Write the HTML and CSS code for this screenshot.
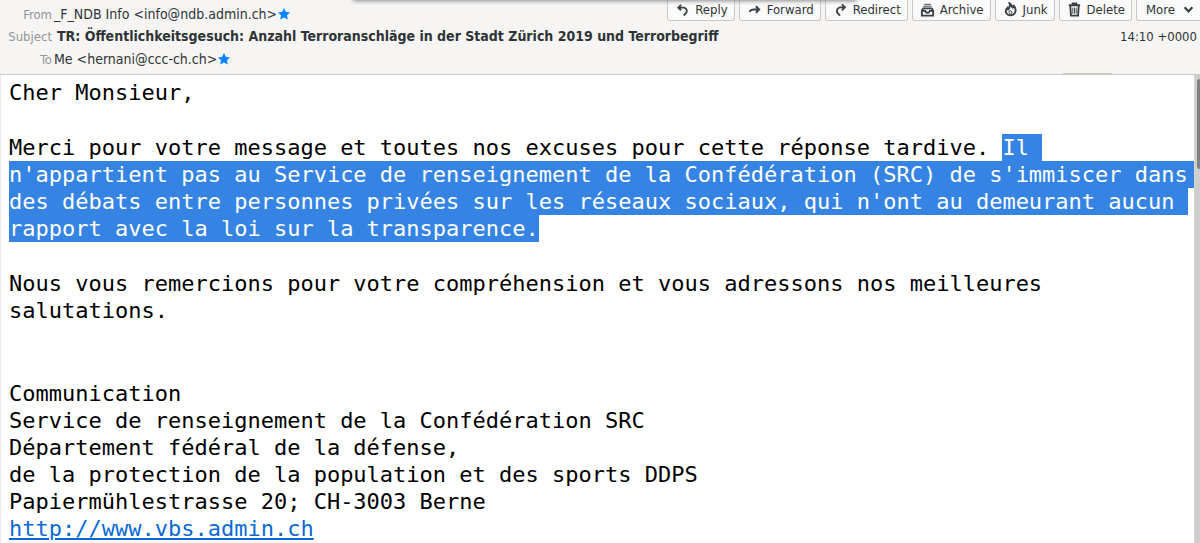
FILE: index.html
```
<!DOCTYPE html>
<html lang="fr">
<head>
<meta charset="utf-8">
<title>TR: Öffentlichkeitsgesuch</title>
<link rel="stylesheet" href="styles.css">
</head>
<body>
<header class="head">
  <div class="top-shadow"></div>
  <div class="row row-from">
    <span class="label">From</span>
    <span class="value">_F_NDB Info &lt;info@ndb.admin.ch&gt;</span>
    <svg class="star" viewBox="0 0 14 14" aria-hidden="true"><path d="M7 1l1.800 3.800 4.200.6-3 2.900.8 4.300L7 10.600l-3.800 2 .8-4.300-3-2.900 4.200-.6z"/></svg>
    <div class="actions">
      <button type="button"><svg viewBox="0 0 16 16" aria-hidden="true"><path d="M6.500 3L3.500 6l3 3M4 6h5.500a3.500 3.500 0 0 1 2 6L9.500 14.500"/></svg>Reply</button>
      <button type="button"><svg viewBox="0 0 16 16" aria-hidden="true"><path d="M9.500 4.500L13 8l-3.500 3.500M13 8H7Q4 8 2.500 10.500"/></svg>Forward</button>
      <button type="button"><svg viewBox="0 0 16 16" aria-hidden="true"><path d="M9.500 2.500l3.200 3.200-3.200 3.200M12.500 5.700H7.500a4 4 0 0 0-2.500 6.300L7.500 14.500"/></svg>Redirect</button>
      <button type="button"><svg viewBox="0 0 16 16" aria-hidden="true"><path d="M2 9l1.500-2.200h9L14 9v5.500H2zM2 9.500h3.600q.5 2 2.400 2t2.400-2H14"/><path class="thin" d="M3.500 4.500h9M4.500 2.500h7"/></svg>Archive</button>
      <button type="button"><svg viewBox="0 0 16 16" aria-hidden="true"><path d="M7 1.500c2.500 1.500 2 3.500 3.500 4.500.8-.5.800-1.500.500-2.500 2.500 2.500 3 6 1.500 8.500-1.500 2.500-6.500 3-8.500.5C2 10 3 8 4.500 6.500c0 1 .5 1.500 1 1.500C7 6 8 4 7 1.500z"/><path class="thin" d="M8 13c-2-1-2-2.500-.500-4 .5 1.300 1 1.500 1.500 1 1 1.200.5 2.500-1 3z"/></svg>Junk</button>
      <button type="button"><svg viewBox="0 0 16 16" aria-hidden="true"><path d="M2 3.500h12M6 3V1.500h4V3M3.500 4l.7 10.500h7.600L12.500 4"/><path class="thin" d="M6.200 6v6.500M8 6v6.500M9.800 6v6.500"/></svg>Delete</button>
      <button type="button" class="more">More<svg class="chev" viewBox="0 0 10 10" aria-hidden="true"><path d="M1.500 3L5 6.800 8.500 3"/></svg></button>
    </div>
  </div>
  <div class="row row-subject">
    <span class="label">Subject</span>
    <h1 class="subject">TR: Öffentlichkeitsgesuch: Anzahl Terroranschläge in der Stadt Zürich 2019 und Terrorbegriff</h1>
    <time class="time">14:10 +0000</time>
  </div>
  <div class="row row-to">
    <span class="label">To</span>
    <span class="value">Me &lt;hernani@ccc-ch.ch&gt;</span>
    <svg class="star" viewBox="0 0 14 14" aria-hidden="true"><path d="M7 1l1.800 3.800 4.200.6-3 2.900.8 4.300L7 10.600l-3.800 2 .8-4.300-3-2.900 4.200-.6z"/></svg>
  </div>
  <div class="tab-edge"></div>
</header>
<main class="pane">
  <article class="mail">
    <p>Cher Monsieur,</p>
    <p>Merci pour votre message et toutes nos excuses pour cette réponse tardive. <span class="sel">Il <br>n'appartient pas au Service de renseignement de la Confédération (SRC) de s'immiscer dans <br>des débats entre personnes privées sur les réseaux sociaux, qui n'ont au demeurant aucun <br>rapport avec la loi sur la transparence.</span></p>
    <p class="closing">Nous vous remercions pour votre compréhension et vous adressons nos meilleures<br>salutations.</p>
    <p>Communication<br>Service de renseignement de la Confédération SRC<br>Département fédéral de la défense,<br>de la protection de la population et des sports DDPS<br>Papiermühlestrasse 20; CH-3003 Berne<br><a href="http://www.vbs.admin.ch">http://www.vbs.admin.ch</a></p>
  </article>
  <div class="scroll"><div class="thumb"></div></div>
</main>
</body>
</html>
```
FILE: styles.css
```
* { box-sizing: border-box; }
html, body { height: 100%; }
body {
  margin: 0;
  display: flex;
  flex-direction: column;
  overflow: hidden;
  background: #fff;
  color: #2e3436;
  font-family: "DejaVu Sans Condensed", "DejaVu Sans", sans-serif;
  font-stretch: condensed;
  font-size: 13px;
}
.head {
  position: relative;
  flex: none;
  background: #f6f5f4;
  border-bottom: 1px solid #cdc7c2;
}
.top-shadow {
  position: absolute;
  top: -4px;
  left: 354px;
  width: 502px;
  height: 4px;
  box-shadow: 0 0 4px 1px #888;
}
.tab-edge {
  position: absolute;
  right: 88px;
  bottom: 0;
  width: 49px;
  height: 1px;
  background: #cfcac6;
}
.row { display: flex; align-items: center; }
.row-from { height: 28px; }
.row-subject { height: 16px; }
.row-to { height: 30px; }
.label {
  flex: none;
  width: 52px;
  margin-right: 2px;
  text-align: right;
  color: #929595;
}
.value { font-size: 14px; white-space: nowrap; }
.subject {
  margin: 0 0 0 3px;
  font-size: 14px;
  line-height: 16px;
  font-weight: bold;
  white-space: nowrap;
}
.time { margin-left: auto; padding-right: 3px; }
.star { width: 14px; height: 14px; fill: #0a84ff; }
.actions {
  align-self: flex-start;
  display: flex;
  gap: 4px;
  margin-left: auto;
}
.actions button {
  display: flex;
  align-items: center;
  gap: 5px;
  height: 21px;
  padding: 0 6px 2px 7px;
  border: 1px solid #cdc7c2;
  border-top: 0;
  border-radius: 0 0 3px 3px;
  background: #fbfafa;
  color: inherit;
  font: inherit;
}
.actions svg {
  width: 15px;
  height: 15px;
  fill: none;
  stroke: #3a4043;
  stroke-width: 2;
}
.actions .thin { stroke-width: 1; }
.actions .more { padding: 0 6px 2px 9px; gap: 8px; border-right: 0; border-radius: 0 0 0 3px; }
.actions .chev { width: 11px; height: 11px; }
.pane { flex: 1; min-height: 0; display: flex; border-left: 1px solid #eeedec; }
.mail {
  flex: 1;
  min-width: 0;
  overflow: hidden;
  padding: 4px 0 0 8px;
  color: #000;
  font: 22px/27px "DejaVu Sans Mono", monospace;
}
.mail p { margin: 0 0 28px; white-space: pre; }
.mail .closing { margin-bottom: 56px; }
.mail a { color: #0b69d6; text-decoration: underline; }
.sel {
  padding: 1px 0;
  background: #3584e4;
  color: #fff;
}
.scroll { flex: none; width: 6px; padding: 4px 0 0 2px; background: #cecece; border-left: 1px solid #d8d4d0; }
.thumb { height: 90px; border-radius: 3px 0 0 3px; background: #7e8180; }
```
